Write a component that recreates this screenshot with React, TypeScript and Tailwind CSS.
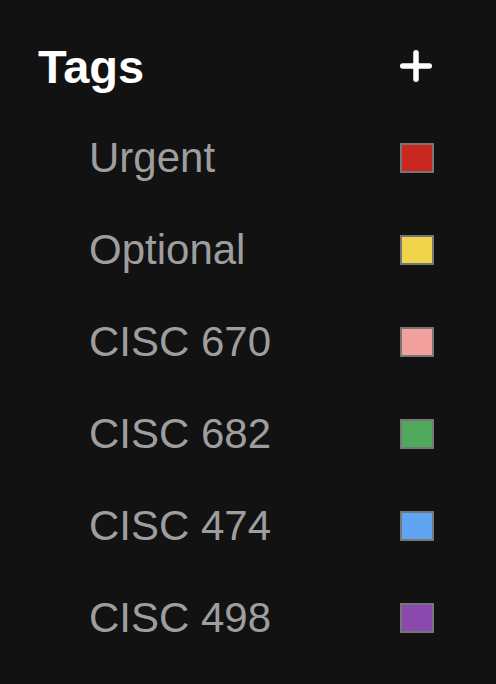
const tags = [
  { name: "Urgent", color: "bg-[#c9271f]" },
  { name: "Optional", color: "bg-[#f0d44c]" },
  { name: "CISC 670", color: "bg-[#f3a19e]" },
  { name: "CISC 682", color: "bg-[#4fa85b]" },
  { name: "CISC 474", color: "bg-[#5fa5f1]" },
  { name: "CISC 498", color: "bg-[#8a49ad]" },
];

function PlusIcon() {
  return (
    <svg width="32" height="32" viewBox="0 0 32 32" fill="none" stroke="currentColor" strokeWidth="5.5" strokeLinecap="round">
      <line x1="16" y1="2.75" x2="16" y2="29.25" />
      <line x1="2.75" y1="16" x2="29.25" y2="16" />
    </svg>
  );
}

export default function App() {
  return (
    <div className="min-h-screen bg-[#121212] pt-[38px] font-['Liberation_Sans',Arial,sans-serif]">
      {/* header */}
      <div className="flex h-[56px] items-center justify-between pl-[38px] pr-[64px]">
        <h2 className="text-[47px] font-bold leading-none text-white">Tags</h2>
        <button className="flex h-[32px] w-[32px] items-center justify-center text-white" aria-label="Add tag">
          <PlusIcon />
        </button>
      </div>

      <ul className="mt-[18px] pl-[89px] pr-[62px]">
        {tags.map((tag) => (
          <li key={tag.name} className="flex h-[92px] items-center justify-between">
            <span className="text-[42px] leading-none text-[#9e9e9e]">{tag.name}</span>
            <span className={`h-[30px] w-[34px] border-2 border-[#767676] ${tag.color}`} />
          </li>
        ))}
      </ul>
    </div>
  );
}
